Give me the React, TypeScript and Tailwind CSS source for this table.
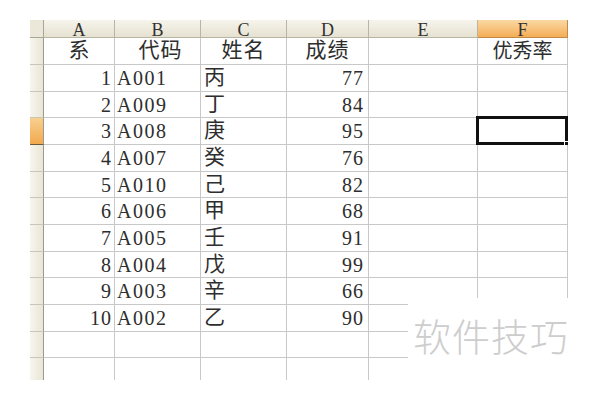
import React from 'react';

const cols = [
  { key: 'A', w: 'w-[71px]' },
  { key: 'B', w: 'w-[86px]' },
  { key: 'C', w: 'w-[86px]' },
  { key: 'D', w: 'w-[82px]' },
  { key: 'E', w: 'w-[109px]' },
  { key: 'F', w: 'w-[90px]' },
];

const data = [
  ['1', 'A001', '丙', '77'],
  ['2', 'A009', '丁', '84'],
  ['3', 'A008', '庚', '95'],
  ['4', 'A007', '癸', '76'],
  ['5', 'A010', '己', '82'],
  ['6', 'A006', '甲', '68'],
  ['7', 'A005', '壬', '91'],
  ['8', 'A004', '戊', '99'],
  ['9', 'A003', '辛', '66'],
  ['10', 'A002', '乙', '90'],
];

const heights = ['h-[27px]', 'h-[26px]', 'h-[27px]', 'h-[27px]', 'h-[26px]', 'h-[27px]', 'h-[27px]', 'h-[26px]', 'h-[27px]', 'h-[27px]'];

const font = { fontFamily: '"Liberation Serif", "Noto Sans CJK SC", serif' };

function Cell({ w, children, className = '' }: { w: string; children?: React.ReactNode; className?: string }) {
  return (
    <div className={`${w} shrink-0 h-full border-r border-b border-[#c8c8c8] flex items-center overflow-hidden ${className}`}>
      {children}
    </div>
  );
}

function RowHead({ active = false, last = false }: { active?: boolean; last?: boolean }) {
  return (
    <div
      className={`w-[14px] shrink-0 h-full border-r border-[#9c9a8c] ${last ? '' : 'border-b'} ${
        active ? 'bg-gradient-to-b from-[#f8cf8e] to-[#f2a94c] border-b-[#6b5a3c]' : 'bg-gradient-to-r from-[#f7f6ee] to-[#e9e6d6] border-b-[#c9c6b6]'
      }`}
    />
  );
}

export default function App() {
  return (
    <div className="relative w-[600px] h-[400px] bg-white overflow-hidden" style={font}>
      <div className="pl-[30px] pt-[20px] flex flex-col text-[#2e2e2e]">
        {/* column letters */}
        <div className="flex h-[18px]">
          <div className="w-[14px] shrink-0 h-full bg-[#ebe8d9] border-r border-b border-[#a8a697]" />
          {cols.map((c) => (
            <div
              key={c.key}
              className={`${c.w} shrink-0 h-full border-r border-b flex items-center justify-center ${
                c.key === 'F'
                  ? 'bg-gradient-to-b from-[#fad9a3] to-[#f3ad54] border-[#c08a44]'
                  : 'bg-gradient-to-b from-[#f6f4ec] to-[#e6e2d1] border-[#b8b5a5]'
              }`}
            >
              <span className="text-lg leading-[18px] mt-[2px] text-[#333]">{c.key}</span>
            </div>
          ))}
        </div>

        {/* titles */}
        <div className="flex h-[27px]">
          <RowHead />
          <Cell w={cols[0].w} className="justify-center text-[21px]">系</Cell>
          <Cell w={cols[1].w} className="justify-center text-[21px] tracking-[1px] pl-[6px]">代码</Cell>
          <Cell w={cols[2].w} className="justify-center text-[21px] tracking-[1px]">姓名</Cell>
          <Cell w={cols[3].w} className="justify-center text-[21px] tracking-[1px]">成绩</Cell>
          <Cell w={cols[4].w} />
          <Cell w={cols[5].w} className="justify-center text-[20px]">优秀率</Cell>
        </div>

        {data.map((r, i) => (
          <div key={r[1]} className={`flex ${heights[i]}`}>
            <RowHead active={i === 2} />
            <Cell w={cols[0].w} className="justify-end pr-[2px] text-[20px] tracking-[1px]">{r[0]}</Cell>
            <Cell w={cols[1].w} className="pl-[2px] text-[20px] tracking-[1.5px]">{r[1]}</Cell>
            <Cell w={cols[2].w} className="pl-[3px] text-[21px]">{r[2]}</Cell>
            <Cell w={cols[3].w} className="justify-end pr-[4px] text-[20px] tracking-[1px]">{r[3]}</Cell>
            <Cell w={cols[4].w} />
            <Cell w={cols[5].w} className="relative overflow-visible">
              {i === 2 && (
                <div className="absolute -left-[2px] -top-[2px] w-[92px] h-[29px] border-[3px] border-[#111]">
                  <div className="absolute -right-[4px] -bottom-[4px] w-[5px] h-[5px] bg-[#111] border border-white" />
                </div>
              )}
            </Cell>
          </div>
        ))}

        <div className="flex h-[26px]">
          <RowHead />
          {cols.map((c) => (
            <Cell key={c.key} w={c.w} />
          ))}
        </div>
        <div className="flex h-[22px]">
          <RowHead last />
          {cols.map((c) => (
            <div key={c.key} className={`${c.w} shrink-0 h-full border-r border-[#c8c8c8]`} />
          ))}
        </div>
      </div>

      {/* watermark */}
      <div className="absolute left-[408px] top-[298px] w-[192px] h-[102px] bg-white">
        <div
          className="pl-[5px] pt-[18px] text-[38px] leading-none tracking-[1px] text-[#cdcdcd] font-light"
          style={{ fontFamily: '"Noto Sans CJK SC", sans-serif' }}
        >
          软件技巧
        </div>
      </div>
    </div>
  );
}
